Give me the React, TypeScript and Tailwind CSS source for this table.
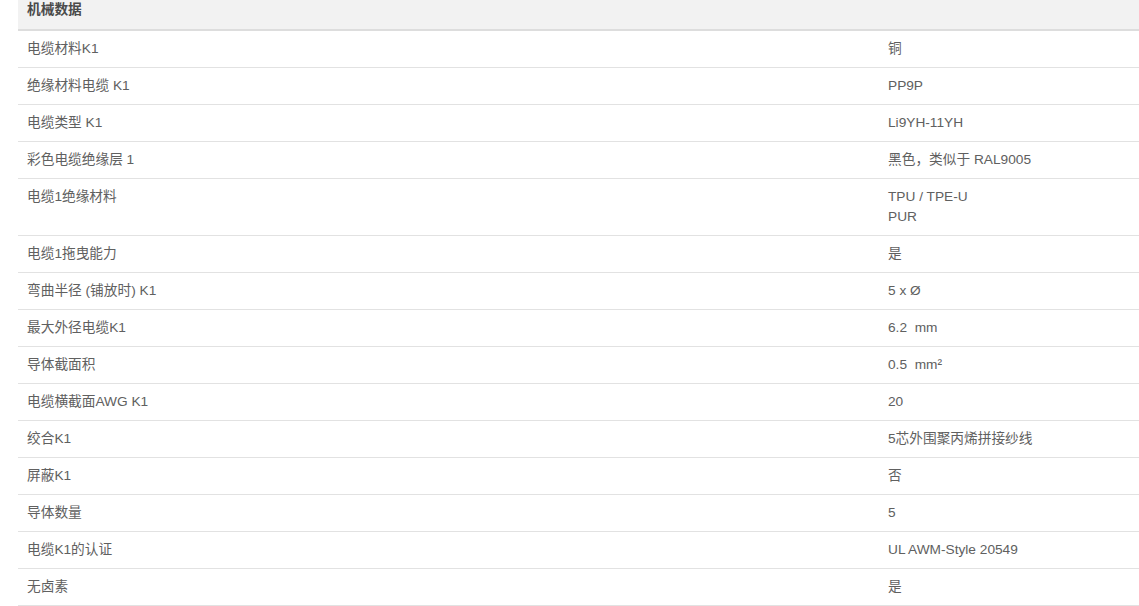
const rows: [string, string[]][] = [
  ["电缆材料K1", ["铜"]],
  ["绝缘材料电缆 K1", ["PP9P"]],
  ["电缆类型 K1", ["Li9YH-11YH"]],
  ["彩色电缆绝缘层 1", ["黑色，类似于 RAL9005"]],
  ["电缆1绝缘材料", ["TPU / TPE-U", "PUR"]],
  ["电缆1拖曳能力", ["是"]],
  ["弯曲半径 (铺放时) K1", ["5 x Ø"]],
  ["最大外径电缆K1", ["6.2\u00a0 mm"]],
  ["导体截面积", ["0.5\u00a0 mm²"]],
  ["电缆横截面AWG K1", ["20"]],
  ["绞合K1", ["5芯外围聚丙烯拼接纱线"]],
  ["屏蔽K1", ["否"]],
  ["导体数量", ["5"]],
  ["电缆K1的认证", ["UL AWM-Style 20549"]],
  ["无卤素", ["是"]],
]

export default function App() {
  return (
    <div
      className="min-h-screen bg-white pl-[18px] text-[13.7px] text-[#606060]"
      style={{ fontFamily: '"Liberation Sans", Arial, "Noto Sans CJK SC", sans-serif' }}
    >
      <table className="w-full border-collapse">
        <thead>
          <tr className="bg-[#f2f2f2] border-b-2 border-[#dddddd]">
            <th
              colSpan={2}
              className="h-[30px] pl-[9px] pb-[9px] text-left align-middle font-bold leading-5 text-[#4a4a4a]"
            >
              机械数据
            </th>
          </tr>
        </thead>
        <tbody>
          {rows.map(([label, values]) => (
            <tr key={label} className="border-b border-[#e2e2e2]">
              <td className="w-[861px] pl-[9px] py-2 align-top leading-5">{label}</td>
              <td className="pl-[9px] py-2 align-top leading-5">
                {values.map((v) => (
                  <div key={v}>{v}</div>
                ))}
              </td>
            </tr>
          ))}
        </tbody>
      </table>
    </div>
  )
}
